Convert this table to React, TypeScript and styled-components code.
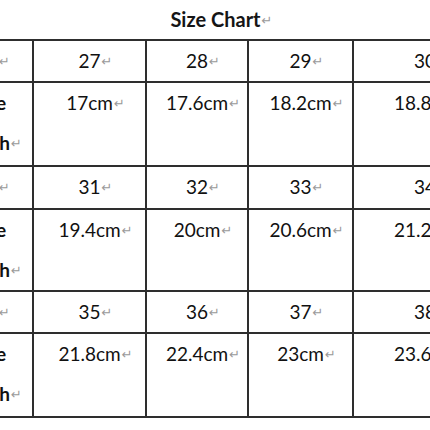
import styled, { createGlobalStyle } from "styled-components";

const GlobalStyle = createGlobalStyle`
  html, body {
    margin: 0;
    padding: 0;
    background: #fff;
    overflow: hidden;
  }
  body {
    font-family: Lato, "Liberation Sans", sans-serif;
    color: #1b1b1b;
  }
`;

const groups = [
  { sizes: ["27", "28", "29", "30"], lengths: ["17cm", "17.6cm", "18.2cm", "18.8cm"] },
  { sizes: ["31", "32", "33", "34"], lengths: ["19.4cm", "20cm", "20.6cm", "21.2cm"] },
  { sizes: ["35", "36", "37", "38"], lengths: ["21.8cm", "22.4cm", "23cm", "23.6cm"] },
];

const Mark = () => <Return>↵</Return>;

const App = () => {
  return (
    <>
      <GlobalStyle />
      <Page>
        <Title>
          Size Chart
          <Mark />
        </Title>
        <Chart>
          {groups.map((g, i) => (
            <Group key={i}>
              <Cell $label>
                Size
                <Mark />
              </Cell>
              {g.sizes.map((s) => (
                <Cell key={s}>
                  {s}
                  <Mark />
                </Cell>
              ))}
              <Cell $label $tall>
                Insole Length
                <Mark />
              </Cell>
              {g.lengths.map((l) => (
                <Cell key={l} $tall>
                  {l}
                  <Mark />
                </Cell>
              ))}
            </Group>
          ))}
        </Chart>
      </Page>
    </>
  );
};

export default App;

const Page = styled.div`
  width: 430px;
  height: 430px;
  overflow: hidden;
`;

const Title = styled.h2`
  margin: 0;
  height: 39px;
  line-height: 39px;
  text-align: center;
  font-size: 20px;
  font-weight: 700;
  color: #151515;
  padding-left: 1px;
`;

const Chart = styled.div`
  display: grid;
  gap: 2px;
  width: 564px;
  margin-left: -68px;
  padding: 2px 0;
  background: #2e2e2e;
`;

const Group = styled.div`
  display: grid;
  grid-column: 1 / -1;
  grid-template-columns: 100px 111px 100px 103px 142px;
  gap: 2px;

  &:nth-child(1) {
    grid-template-rows: 40px 82px;
  }
  &:nth-child(2) {
    grid-template-rows: 41px 80px;
  }
  &:nth-child(3) {
    grid-template-rows: 40px 82px;
  }
`;

const Cell = styled.div<{ $label?: boolean; $tall?: boolean }>`
  background: #fff;
  text-align: center;
  font-size: 19px;
  line-height: 40px;
  color: #111;
  font-weight: ${(p) => (p.$label ? 700 : 400)};
  padding-right: ${(p) => (p.$label ? "2px" : "0")};
  overflow: hidden;
`;

const Return = styled.span`
  display: inline-block;
  width: 0;
  overflow: visible;
  white-space: nowrap;
  font-family: "DejaVu Sans", sans-serif;
  font-size: 13px;
  font-weight: 400;
  color: #9a9a9a;
  vertical-align: 2px;
  text-indent: 1px;
`;
